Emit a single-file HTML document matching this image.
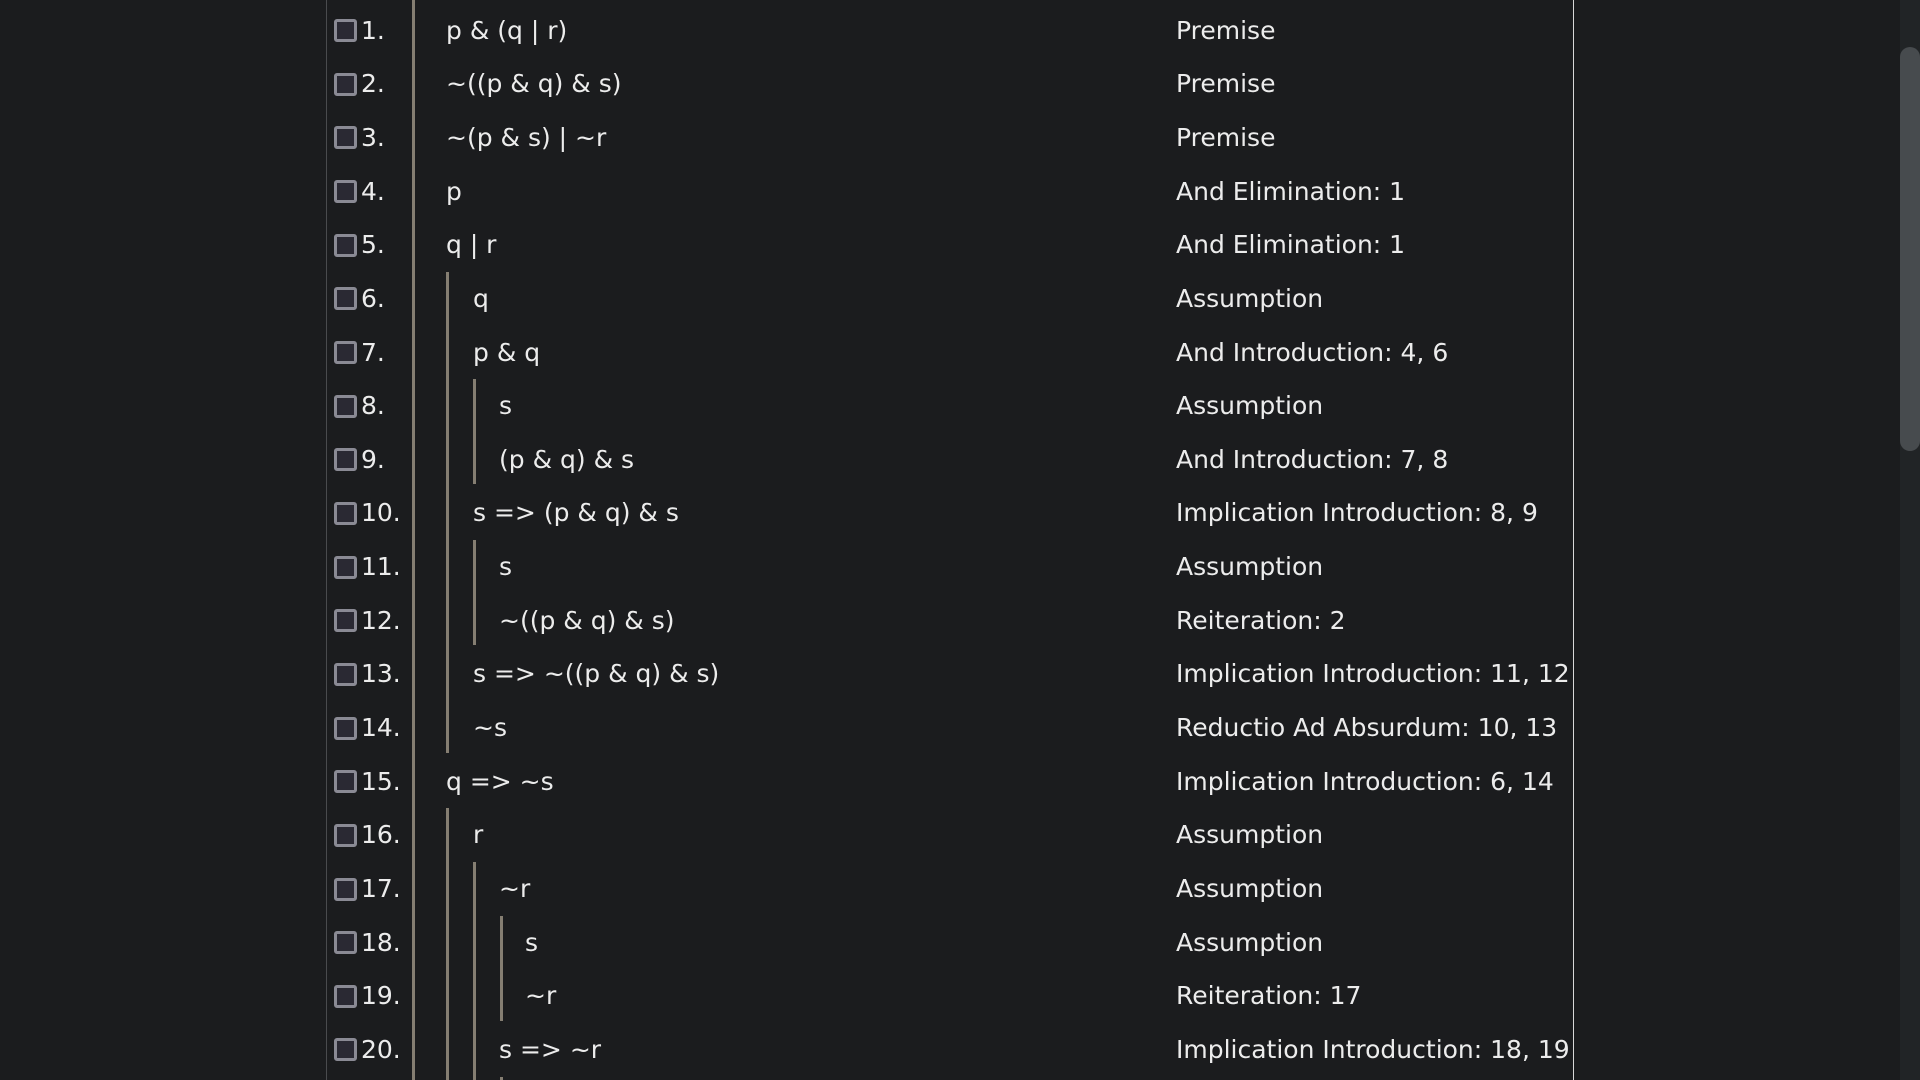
<!DOCTYPE html>
<html><head><meta charset="utf-8"><style>
html,body{margin:0;padding:0;width:1920px;height:1080px;overflow:hidden;background:#1b1c1e;}
body{position:relative;font-family:"DejaVu Sans",sans-serif;font-size:25px;color:#ececec;}
.r{position:absolute;left:0;height:53.65px;line-height:53.65px;width:1900px;}
.cb{position:absolute;left:334px;top:15.5px;width:17px;height:17px;border:3px solid #8a8a94;border-radius:3px;background:#2a2933;}
.n{position:absolute;left:361px;}
.f{position:absolute;white-space:pre;}
.j{position:absolute;left:1176px;white-space:pre;}
.bar{position:absolute;width:3px;background:#857e72;}
</style></head><body>
<div style="position:absolute;left:326px;top:0;width:1px;height:1080px;background:#4a4b4e"></div>
<div style="position:absolute;left:412px;top:0;width:3px;height:1080px;background:#857e72"></div>
<div style="position:absolute;left:1573px;top:0;width:1px;height:1080px;background:#d8d8d8"></div>
<div style="position:absolute;left:1900px;top:0;width:20px;height:1080px;background:#212426"></div>
<div style="position:absolute;left:1900px;top:47px;width:20px;height:404px;background:#474b4e;border-radius:10px"></div>

<div class="bar" style="left:446px;top:272px;height:481px"></div>
<div class="bar" style="left:446px;top:808px;height:272px"></div>
<div class="bar" style="left:473px;top:379px;height:105px"></div>
<div class="bar" style="left:473px;top:540px;height:105px"></div>
<div class="bar" style="left:473px;top:862px;height:218px"></div>
<div class="bar" style="left:500px;top:916px;height:105px"></div>
<div class="bar" style="left:500px;top:1077px;height:10px"></div>

<div class="r" style="top:3.6px"><div class="cb"></div><span class="n">1.</span><span class="f" style="left:446px">p &amp; (q | r)</span><span class="j">Premise</span></div>
<div class="r" style="top:57.25px"><div class="cb"></div><span class="n">2.</span><span class="f" style="left:446px">~((p &amp; q) &amp; s)</span><span class="j">Premise</span></div>
<div class="r" style="top:110.9px"><div class="cb"></div><span class="n">3.</span><span class="f" style="left:446px">~(p &amp; s) | ~r</span><span class="j">Premise</span></div>
<div class="r" style="top:164.55px"><div class="cb"></div><span class="n">4.</span><span class="f" style="left:446px">p</span><span class="j">And Elimination: 1</span></div>
<div class="r" style="top:218.2px"><div class="cb"></div><span class="n">5.</span><span class="f" style="left:446px">q | r</span><span class="j">And Elimination: 1</span></div>
<div class="r" style="top:271.85px"><div class="cb"></div><span class="n">6.</span><span class="f" style="left:473px">q</span><span class="j">Assumption</span></div>
<div class="r" style="top:325.5px"><div class="cb"></div><span class="n">7.</span><span class="f" style="left:473px">p &amp; q</span><span class="j">And Introduction: 4, 6</span></div>
<div class="r" style="top:379.15px"><div class="cb"></div><span class="n">8.</span><span class="f" style="left:499px">s</span><span class="j">Assumption</span></div>
<div class="r" style="top:432.8px"><div class="cb"></div><span class="n">9.</span><span class="f" style="left:499px">(p &amp; q) &amp; s</span><span class="j">And Introduction: 7, 8</span></div>
<div class="r" style="top:486.45px"><div class="cb"></div><span class="n">10.</span><span class="f" style="left:473px">s =&gt; (p &amp; q) &amp; s</span><span class="j">Implication Introduction: 8, 9</span></div>
<div class="r" style="top:540.1px"><div class="cb"></div><span class="n">11.</span><span class="f" style="left:499px">s</span><span class="j">Assumption</span></div>
<div class="r" style="top:593.75px"><div class="cb"></div><span class="n">12.</span><span class="f" style="left:499px">~((p &amp; q) &amp; s)</span><span class="j">Reiteration: 2</span></div>
<div class="r" style="top:647.4px"><div class="cb"></div><span class="n">13.</span><span class="f" style="left:473px">s =&gt; ~((p &amp; q) &amp; s)</span><span class="j">Implication Introduction: 11, 12</span></div>
<div class="r" style="top:701.05px"><div class="cb"></div><span class="n">14.</span><span class="f" style="left:473px">~s</span><span class="j">Reductio Ad Absurdum: 10, 13</span></div>
<div class="r" style="top:754.7px"><div class="cb"></div><span class="n">15.</span><span class="f" style="left:446px">q =&gt; ~s</span><span class="j">Implication Introduction: 6, 14</span></div>
<div class="r" style="top:808.35px"><div class="cb"></div><span class="n">16.</span><span class="f" style="left:473px">r</span><span class="j">Assumption</span></div>
<div class="r" style="top:862px"><div class="cb"></div><span class="n">17.</span><span class="f" style="left:499px">~r</span><span class="j">Assumption</span></div>
<div class="r" style="top:915.65px"><div class="cb"></div><span class="n">18.</span><span class="f" style="left:525px">s</span><span class="j">Assumption</span></div>
<div class="r" style="top:969.3px"><div class="cb"></div><span class="n">19.</span><span class="f" style="left:525px">~r</span><span class="j">Reiteration: 17</span></div>
<div class="r" style="top:1022.95px"><div class="cb"></div><span class="n">20.</span><span class="f" style="left:499px">s =&gt; ~r</span><span class="j">Implication Introduction: 18, 19</span></div>
</body></html>
